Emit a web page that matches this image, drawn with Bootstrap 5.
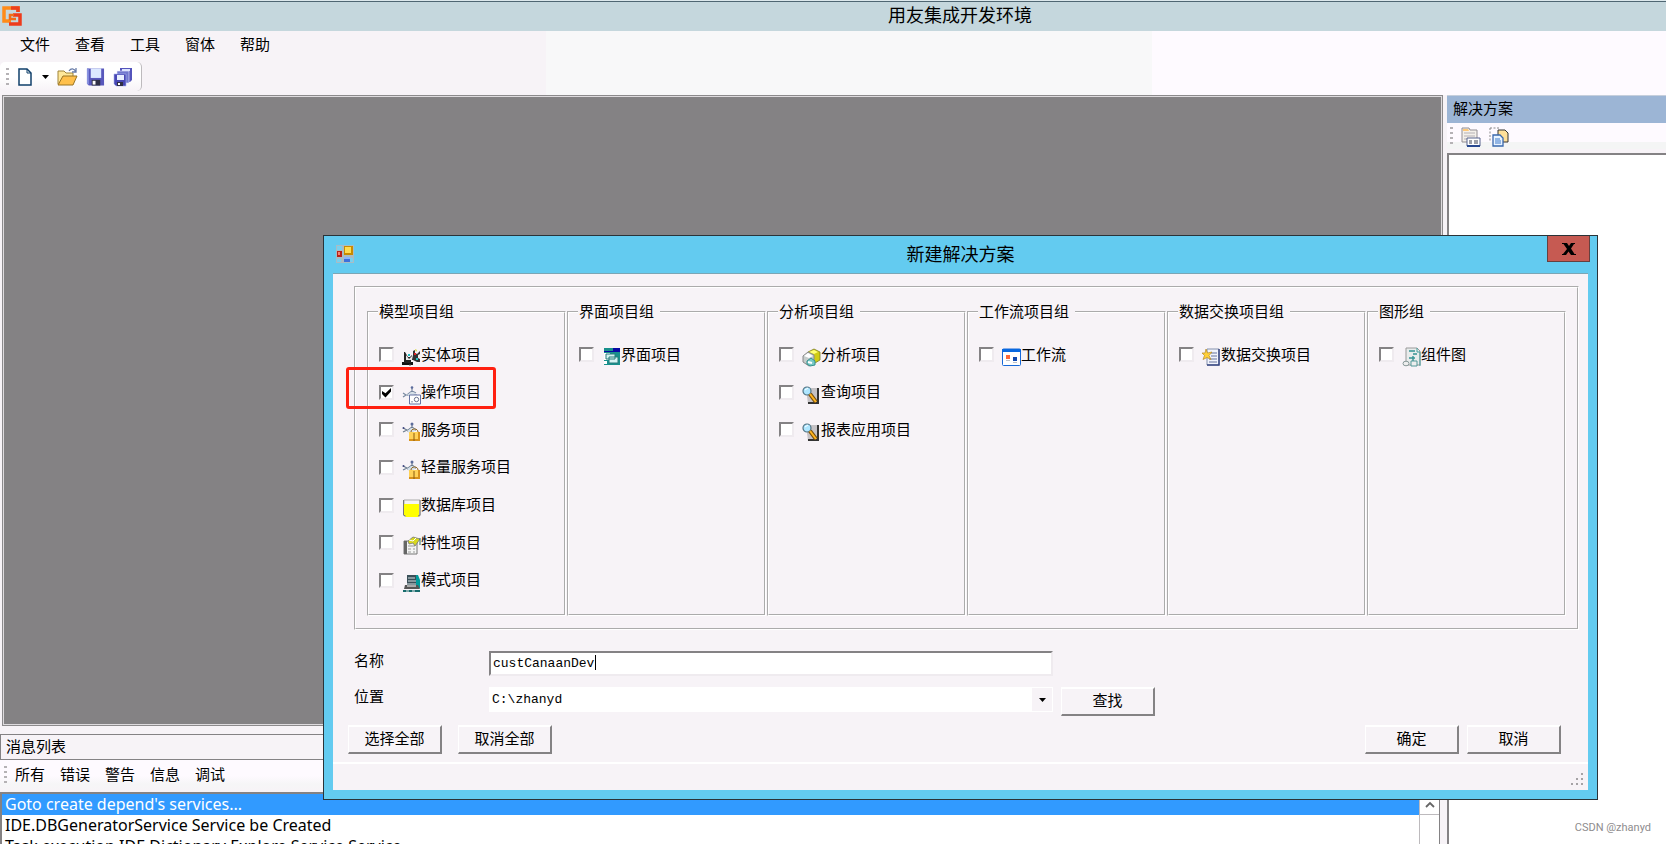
<!DOCTYPE html>
<html lang="zh-CN">
<head>
<meta charset="utf-8">
<meta name="viewport" content="width=device-width, initial-scale=1">
<title>用友集成开发环境</title>
<link href="https://cdn.jsdelivr.net/npm/bootstrap@5.3.0/dist/css/bootstrap.min.css" rel="stylesheet">
<style>
  :root { --face:#f7f3f7; --shade:#848284; --sky:#63cbf0; }
  body { font:15px/22px "Liberation Sans","Noto Sans CJK SC",sans-serif; color:#000; background:var(--face); }
  button, input, select { font:inherit; color:inherit; }
  .app-title { height:31px; background:#c5d7dd; border-top:1px solid #dce8ec; box-shadow:inset 0 1px #4f6672; font-size:18px; padding-left:254px; }
  .app-logo { position:absolute; left:2px; top:5px; }
  .top-bars { background:linear-gradient(90deg,var(--face) 546px,#f8f8f9 546px,#f8f8f9 1152px,#fefaff 1152px); height:64px; }
  .menu-strip { gap:25px; padding:3px 0 0 20px; height:31px; align-items:flex-start; }
  .flat { background:none; border:0; padding:0; }
  .tool-strip { width:142px; height:29px; padding-left:6px; border-radius:5px; background:linear-gradient(#fff 15px,var(--face)); border-right:1px solid #bdbabd; }
  .grip { width:3px; height:18px; flex:none; background:repeating-linear-gradient(#b5b2b5 0 2px,transparent 2px 5px); }
  .mdi { background:var(--shade); border:1px solid #8c8a8c; box-shadow:inset 0 0 0 1px #dedbde; margin:0 4px 0 2px; }
  .side { width:219px; }
  .side-title { height:28px; padding:2px 0 0 6px; background:#9cb5d5; border-top:1px solid #c6cfdc; }
  .side-tools { height:30px; padding:4px 0 0 3px; background:linear-gradient(#fefaff 19px,#f4f5f5 19px 26px,var(--face) 26px); }
  .side-tree { background:#fff; border:solid var(--shade); border-width:2px 0 0 2px; }
  .msg-title { height:26px; padding:1px 5px; border:1px solid var(--shade); margin-right:4px; }
  .msg-tools { height:32px; padding:0 0 2px 4px; background:linear-gradient(#fefaff 16px,#f6f6f7 24px,var(--face)); }
  .msg-tools .tabs { gap:15px; padding-left:8px; }
  .msg-box { height:52px; margin-right:7px; border:2px solid var(--shade); border-width:2px 1px 0 2px; background:#fff; overflow:hidden; }
  .msg-list { font-family:"Noto Sans","Noto Sans CJK SC",sans-serif; font-size:16px; line-height:21px; white-space:nowrap; }
  .msg-list li { padding-left:3px; }
  .msg-list .chosen { background:#319aff; color:#fff; }
  .scroller { width:20px; border-left:1px solid #bdbabd; }
  .scroller button { height:21px; border-bottom:1px solid #bdbabd; }
  .watermark { position:absolute; right:15px; bottom:5px; font:11px/22px Roboto,sans-serif; color:#8e8c8e; }

  .dlg { position:absolute; left:323px; right:68px; top:235px; background:var(--sky); border:1px solid #2a3338; padding:0 9px 9px; }
  .dlg-title { height:37px; font-size:18px; }
  .dlg-icon { position:absolute; left:12px; top:9px; }
  .dlg-close { position:absolute; right:7px; top:0; width:43px; height:26px; background:#c65a52; border:1px solid #66403f; border-top:0; padding:0; }
  .dlg-body { background:var(--face); border-top:1px solid #7ba6b5; }
  .outer-group { margin:12px 9px 0 21px; padding:13px 11px 12px; border:2px groove #fff; }
  .group-row { display:grid; grid-template-columns:repeat(6,minmax(0,1fr)); gap:1px; }
  .group-row fieldset { border:2px groove #fff; padding:0 0 15px 10px; }
  .group-row legend { float:none; width:auto; margin:0 0 13px -1px; padding:0 6px 0 1px; font-size:15px; line-height:22px; }
  .options { display:grid; grid-template-rows:repeat(7,minmax(0,1fr)); height:263px; }
  .options label { display:flex; align-items:center; position:relative; white-space:nowrap; }
  .options input { appearance:none; width:15px; height:15px; margin:0 8px 0 0; background:#fff; border:2px solid; border-color:var(--shade) #efebef #efebef var(--shade); }
  .options input:checked { background:#fff url("data:image/svg+xml,%3Csvg xmlns='http://www.w3.org/2000/svg' viewBox='0 0 11 11'%3E%3Cpath d='M1 4v3l3.500 3.500L10 4.500V1L4.500 6.300z'/%3E%3C/svg%3E"); }
  .options svg { width:19px; height:20px; margin-top:5px; flex:none; }
  .redmark { position:absolute; left:-33px; top:-7px; width:150px; height:42px; border:3px solid #ff2010; border-radius:3px; }
  .fields { display:grid; grid-template-columns:135px 564px 1fr; row-gap:11px; margin:21px 0 0 21px; }
  .fields > label { margin-top:-1px; }
  .fields input, .fields select { display:block; width:100%; height:25px; font:13px/20px "Liberation Mono","Noto Sans CJK SC",monospace; background:#fff; border-radius:0; outline:0; }
  .fields input { border:2px solid; border-color:var(--shade) #efebef #efebef var(--shade); padding:0 2px; }
  .fields select { appearance:none; border:0; padding:0 3px; }
  .caret { position:absolute; left:106px; top:4px; width:1px; height:15px; background:#000; }
  .drop { position:absolute; right:1px; top:1px; width:20px; height:23px; background:var(--face); pointer-events:none; }
  .bevel { width:94px; height:29px; padding:0 0 2px; background:var(--face); border:solid; border-width:2px 2px 2px 1px; border-color:#fff var(--shade) var(--shade) #fff; }
  .actions { padding:9px 27px 8px 15px; }
  .status { height:28px; border-top:2px solid #fff; }
</style>
</head>
<body class="vh-100 overflow-hidden d-flex flex-column position-relative">

<svg class="d-none">
  <symbol id="i-lock" viewBox="0 0 19 20"><path d="M1 6l4 2M1 10l4-2M5 8h9M10 2v4M6 10V8l4-3 4 3" fill="none" stroke="#6c7c90" stroke-width="1.200"/><circle cx="10" cy="2" r="1.500" fill="#5c6c9c"/><circle cx="1.500" cy="6" r="1" fill="#404880"/><path d="M5 9l4-3 5 1-5 6z" fill="#d5e0e8"/><path d="M7 10h11v9H7z" fill="#d8921c"/><path d="M7 10h9v7H7z" fill="#ffd258"/><path d="M12 11v8M9 10c0-4 7-4 7 0" fill="none" stroke="#8a5c10"/></symbol>
  <symbol id="i-search" viewBox="0 0 19 20"><path d="M4 3h12v16H6z" fill="#c5c2c5"/><path d="M15 3h2v16H6v-2h9z" fill="#333"/><circle cx="5" cy="6" r="4" fill="#aee6ff" stroke="#527485" stroke-width="1.200"/><path d="M3 5l3-2" stroke="#fff"/><path d="M8 9l6 8" stroke="#78500c" stroke-width="4"/><path d="M8 9l6 8" stroke="#ffb420" stroke-width="2"/></symbol>
</svg>

<header class="app-title position-relative d-flex align-items-center justify-content-center flex-shrink-0">
  <svg class="app-logo" width="21" height="20" viewBox="0 0 21 20" fill="none" stroke-width="3.500"><path d="M16 6V2H2v13h7" stroke="#ff8b18"/><path d="M9 2h7v4" stroke="#ec3f1c"/><path d="M7 18h11V9h-7" stroke="#ee3b1b"/><path d="M12 9H8v4h6" stroke="#f26b16" stroke-width="2.500"/></svg>
  <span>用友集成开发环境</span>
</header>

<div class="top-bars flex-shrink-0">
  <nav class="menu-strip d-flex">
    <button class="flat">文件</button><button class="flat">查看</button><button class="flat">工具</button><button class="flat">窗体</button><button class="flat">帮助</button>
  </nav>
  <div class="tool-strip d-flex align-items-center">
    <span class="grip"></span>
    <button class="flat d-flex ms-2" aria-label="新建"><svg width="32" height="20" viewBox="0 0 32 20"><path d="M2 2h8l4 4v12H2z" fill="#fff" stroke="#10406b" stroke-width="1.500"/><path d="M10 2v4h4" fill="none" stroke="#10406b"/><path d="M25 8h7l-3.500 4z"/></svg></button>
    <button class="flat d-flex ms-2" aria-label="打开"><svg width="21" height="20" viewBox="0 0 21 20"><path d="M1 17V4h6l2 2h7v4" fill="#ffe89a" stroke="#a08438"/><path d="M1 18l5-9h14l-4 9z" fill="#ffc04c" stroke="#9a7422"/><path d="M12 4c2-3 5-3 7 1M19 1v4h-4" fill="none" stroke="#687ca8" stroke-width="1.300"/></svg></button>
    <button class="flat d-flex ms-2" aria-label="保存"><svg width="19" height="20" viewBox="0 0 20 20"><path d="M1 1h18v18H3l-2-2z" fill="#5858bc"/><path d="M1 1h2v17l-2-1z" fill="#8892df"/><path d="M5 1h11v10H5z" fill="#dce8ff"/><path d="M6 13h9v6H6z" fill="#303044"/><path d="M7 14h3v4H7z" fill="#fff"/></svg></button>
    <button class="flat d-flex ms-2" aria-label="全部保存"><svg width="20" height="20" viewBox="0 0 20 20"><path d="M7 1h12v12l-2 2H7z" fill="#5454bc"/><path d="M9 2h8v2H9z" fill="#dce4ff"/><path d="M4 4h12v12H4z" fill="#7078ce" stroke="#e8ebff" stroke-width=".600"/><path d="M1 7h12v12H3l-2-2z" fill="#4848b4" stroke="#aab4ee" stroke-width=".600"/><path d="M4 8h7v5H4z" fill="#e8f0ff"/><path d="M4 15h6v4H4z" fill="#303044"/><path d="M5 16h2v2H5z" fill="#fff"/></svg></button>
  </div>
</div>

<main class="d-flex flex-grow-1 overflow-hidden">
  <div class="d-flex flex-column flex-grow-1">
    <section class="mdi flex-grow-1"></section>
    <section class="flex-shrink-0 pt-2">
      <div class="msg-title">消息列表</div>
      <div class="msg-tools d-flex align-items-center">
        <span class="grip"></span>
        <div class="tabs d-flex"><button class="flat">所有</button><button class="flat">错误</button><button class="flat">警告</button><button class="flat">信息</button><button class="flat">调试</button></div>
      </div>
      <div class="msg-box d-flex">
        <ul class="msg-list list-unstyled flex-grow-1 m-0">
          <li class="chosen">Goto create depend's services...</li>
          <li>IDE.DBGeneratorService Service be Created</li>
          <li>Task execution IDE.Dictionary Explore Service Service</li>
        </ul>
        <div class="scroller"><button class="flat w-100 d-flex justify-content-center pt-1" aria-label="向上滚动"><svg width="12" height="12" viewBox="0 0 12 12"><path d="M2 9l4-4 4 4" fill="none" stroke="#666" stroke-width="1.800"/></svg></button></div>
      </div>
    </section>
  </div>
  <aside class="side d-flex flex-column flex-shrink-0">
    <div class="side-title">解决方案</div>
    <div class="side-tools d-flex">
      <span class="grip"></span>
      <button class="flat ms-2 d-flex" aria-label="属性"><svg width="20" height="20" viewBox="0 0 20 20"><path d="M1 3V1h7l1 2h7v12H1z" fill="#f4f0ea" stroke="#928e92"/><path d="M2 2h5l1 2H2z" fill="#ffc878"/><path d="M3 6h11M3 9h11M3 12h4" stroke="#b4b0b4"/><path d="M6 11h13v8H6z" fill="#fff" stroke="#59658e"/><path d="M6 19h13" stroke="#284890" stroke-width="2"/><path d="M8 14h3m2 0h4M8 16h3m2 0h4" stroke="#3d4353"/></svg></button>
      <button class="flat ms-2 d-flex" aria-label="显示所有文件"><svg width="20" height="20" viewBox="0 0 20 20"><path d="M1 1h10M1 1v14" stroke="#888" stroke-dasharray="2 1.500"/><path d="M9 3h7l3 3v9H9z" fill="#ffe09a" stroke="#333"/><path d="M4 8h7l3 3v8H4z" fill="#e8f3ff" stroke="#3968ad" stroke-width="1.300"/><path d="M6 12h5m-5 2h6m-6 2h6" stroke="#3c79c9"/></svg></button>
    </div>
    <div class="side-tree flex-grow-1"></div>
  </aside>
</main>
<div class="watermark">CSDN @zhanyd</div>

<div class="dlg" role="dialog" aria-labelledby="dlgTitle">
  <svg class="dlg-icon" width="18" height="18" viewBox="0 0 18 18"><path d="M0 0h18v18H0z" fill="#a8bcc5"/><path d="M1 1h5v4H1zM1 14h4v3H1zM14 13h3v4h-3z" fill="#78d0ee"/><path d="M8 1h9v9H8z" fill="#c88b00"/><path d="M9 2h6v6H9z" fill="#ffdc50"/><path d="M1 6h5v6H1z" fill="#b82018"/><path d="M2 7h2v3H2z" fill="#f5806e"/><path d="M8 12h6v5H8z" fill="#3c70dc"/><path d="M8 12h6v2H8z" fill="#88b4ff"/></svg>
  <div class="dlg-title d-flex align-items-center justify-content-center" id="dlgTitle">新建解决方案</div>
  <button class="dlg-close d-flex align-items-center justify-content-center" aria-label="关闭"><svg width="14" height="12" viewBox="0 0 14 12"><path d="M0 0h5l2 3 2-3h4v1h-1L9 5.500 12.500 11H14v1H9L6.500 8.500 4 12H0v-1h1l4-5L1.500 1H0z"/></svg></button>
  <form class="dlg-body" onsubmit="return false">
    <div class="outer-group">
      <div class="group-row">
        <fieldset><legend>模型项目组</legend><div class="options">
          <label><input type="checkbox"><svg viewBox="0 0 19 20"><path d="M0 15h11v3H0z" fill="#111"/><path d="M3 5l3 5h2l2-2 1 5H9v3H2V5z" fill="#222"/><path d="M4 8l3 4 3-3v4H4z" fill="#e8e8e8"/><path d="M11 4l2-1v3l2 1 3-3v3l-2 1v3l2 1v3h-3l-4-2z" fill="#333"/><path d="M13 2l2 1-1 2z" fill="#d6d62c"/><path d="M6 7h2v2H6zM14 11h2v2h-2z" fill="#20c0c0"/><path d="M12 6h2v2h-2z" fill="#d22"/><path d="M8 17v2" stroke="#555"/></svg>实体项目</label>
          <label><input type="checkbox" checked><svg viewBox="0 0 19 20"><path d="M1 8l3 2-3 2M4 10h11M10 3v4M6 11V9l4-3 4 2" fill="none" stroke="#7788a0" stroke-width="1.200"/><circle cx="10" cy="2.500" r="1.300" fill="#5c6c9c"/><path d="M5 10l4-3 5 1-5 4z" fill="#d5e0e8"/><path d="M7.500 10h11v9h-11z" fill="#fff" stroke="#6472a4"/><circle cx="14.500" cy="14.500" r="2.200" fill="none" stroke="#68718e"/><path d="M10 16v1.500" stroke="#68718e"/></svg>操作项目<span class="redmark"></span></label>
          <label><input type="checkbox"><svg><use href="#i-lock"/></svg>服务项目</label>
          <label><input type="checkbox"><svg><use href="#i-lock"/></svg>轻量服务项目</label>
          <label><input type="checkbox"><svg viewBox="0 0 19 20"><path d="M2 2h16v16H2z" fill="#f4f4f4" stroke="#aaa"/><path d="M2 6h15v12l-1 1H4l-2-2z" fill="#ff0"/><path d="M1.500 2v15l2 1M18 2v15l-2 1" fill="none" stroke="#777"/></svg>数据库项目</label>
          <label><input type="checkbox"><svg viewBox="0 0 19 20"><path d="M2 6h13v13H2z" fill="#f4f4f4" stroke="#777"/><path d="M2 6h3v13H2z" fill="#666"/><path d="M6 11h7m-7 3h3m2 0h2m-7 3h3m2 0h2" stroke="#999"/><path d="M6 6l5-4 7 2-5 7-2-3-4 1z" fill="#d8d820" stroke="#777" stroke-width=".800"/><path d="M7 5l4 1 3-3" stroke="#fff" fill="none"/><path d="M18 3v7" stroke="#307060"/></svg>特性项目</label>
          <label><input type="checkbox"><svg viewBox="0 0 19 20"><path d="M5 2h9l2 2v10H5z" fill="#3a4f58"/><path d="M14 2h2l2 5v8h-4z" fill="#009b9b"/><path d="M6 5h7M6 8h8M5 11h9" stroke="#d3e1e2"/><path d="M3 12h13l2 4H2z" fill="#555"/><path d="M5 13h9" stroke="#fff"/><path d="M1 17h17v2H1z" fill="#176b6c"/><path d="M4 18h3m3 0h3" stroke="#eee"/></svg>模式项目</label>
        </div></fieldset>
        <fieldset><legend>界面项目组</legend><div class="options">
          <label><input type="checkbox"><svg viewBox="0 0 19 20"><path d="M2 1h16v17H2z" fill="#18908c"/><path d="M2 1h16v4H2z" fill="#0808a4"/><path d="M2 1h9v3H2z" fill="#18908c"/><path d="M2 6h6v7H2z" fill="#fff"/><path d="M4 7h9v5H4zM7 10h9v6H7z" fill="#d5f3f2" stroke="#287c7d"/><path d="M2 14h3v3H2z" fill="#fff"/></svg>界面项目</label>
        </div></fieldset>
        <fieldset><legend>分析项目组</legend><div class="options">
          <label><input type="checkbox"><svg viewBox="0 0 19 20"><path d="M6 5l6-3 6 3v8l-5 3-7-4z" fill="#d0cc14" stroke="#7b7b22" stroke-width=".800"/><path d="M7 5l5-2 4 2-4 2z" fill="#ffff78"/><path d="M1 9l5-4 6 3v8l-5 3-6-4z" fill="#c6cccb" stroke="#888"/><path d="M2 9l4-3 5 3-4 2z" fill="#fff"/><path d="M5 14l4-3 4 3v4l-5 1-3-2z" fill="#78c9c6" stroke="#35918f"/><path d="M6 15l4 1" stroke="#fff" stroke-width="2"/></svg>分析项目</label>
          <label><input type="checkbox"><svg><use href="#i-search"/></svg>查询项目</label>
          <label><input type="checkbox"><svg><use href="#i-search"/></svg>报表应用项目</label>
        </div></fieldset>
        <fieldset><legend>工作流项目组</legend><div class="options">
          <label><input type="checkbox"><svg viewBox="0 0 19 20"><rect x=".5" y="2" width="18" height="16.500" rx="1" fill="#fff" stroke="#1668d8"/><path d="M0 2h19v3H0z" fill="#0868e0"/><path d="M4 8h4v4H4z" fill="#ff6838"/><path d="M11 10h4v4h-4z" fill="#1048b0"/><path d="M4 13h4v1H4zM11 15h4v1h-4z" fill="#bbc0c8"/></svg>工作流</label>
        </div></fieldset>
        <fieldset><legend>数据交换项目组</legend><div class="options">
          <label><input type="checkbox"><svg viewBox="0 0 19 20"><path d="M5 2h12v16H5z" fill="#f2f4fc" stroke="#8490ac"/><path d="M17 2v16H5" fill="none" stroke="#384782" stroke-width="1.500"/><path d="M9 6h6m-6 3h6m-8 3h8m-8 3h8" stroke="#66739c"/><path d="M4 2l1.500 4L10 5 7 8.500l2 4-4-2-4 2 1.500-4L0 6h3z" fill="#ffd038" stroke="#b68a29" stroke-width=".700"/></svg>数据交换项目</label>
        </div></fieldset>
        <fieldset><legend>图形组</legend><div class="options">
          <label><input type="checkbox"><svg viewBox="0 0 19 20"><path d="M4 1h11l3 3v14H4z" fill="#e8ecec" stroke="#999"/><path d="M15 1v4h3v14" fill="none" stroke="#429d9d"/><path d="M7 4h6M11 7h4M7 11h6M11 9v5" stroke="#359393" stroke-width="1.400"/><ellipse cx="4" cy="16.500" rx="3" ry="2.300" fill="#eee" stroke="#899"/><path d="M9 14h6v5H9z" fill="#eee" stroke="#599"/></svg>组件图</label>
        </div></fieldset>
      </div>
    </div>
    <div class="fields">
      <label for="slnName">名称</label>
      <div class="position-relative"><input id="slnName" type="text" value="custCanaanDev" spellcheck="false"><span class="caret"></span></div>
      <span></span>
      <label for="slnPath">位置</label>
      <div class="position-relative"><select id="slnPath"><option>C:\zhanyd</option></select><svg class="drop" viewBox="0 0 20 23"><path d="M7 10h7l-3.500 4z"/></svg></div>
      <div><button class="bevel d-block ms-2" type="button">查找</button></div>
    </div>
    <div class="actions d-flex">
      <button class="bevel me-3" type="button">选择全部</button>
      <button class="bevel me-auto" type="button">取消全部</button>
      <button class="bevel me-2" type="submit">确定</button>
      <button class="bevel" type="button">取消</button>
    </div>
    <div class="status d-flex justify-content-end align-items-end pe-1 pb-1"><svg width="13" height="13" viewBox="0 0 13 13" fill="#a5a2a5"><path d="M10 0h2v2h-2zM5 5h2v2H5zM10 5h2v2h-2zM0 10h2v2H0zM5 10h2v2H5zM10 10h2v2h-2z"/></svg></div>
  </form>
</div>

<script src="https://cdn.jsdelivr.net/npm/bootstrap@5.3.0/dist/js/bootstrap.bundle.min.js"></script>
</body>
</html>
